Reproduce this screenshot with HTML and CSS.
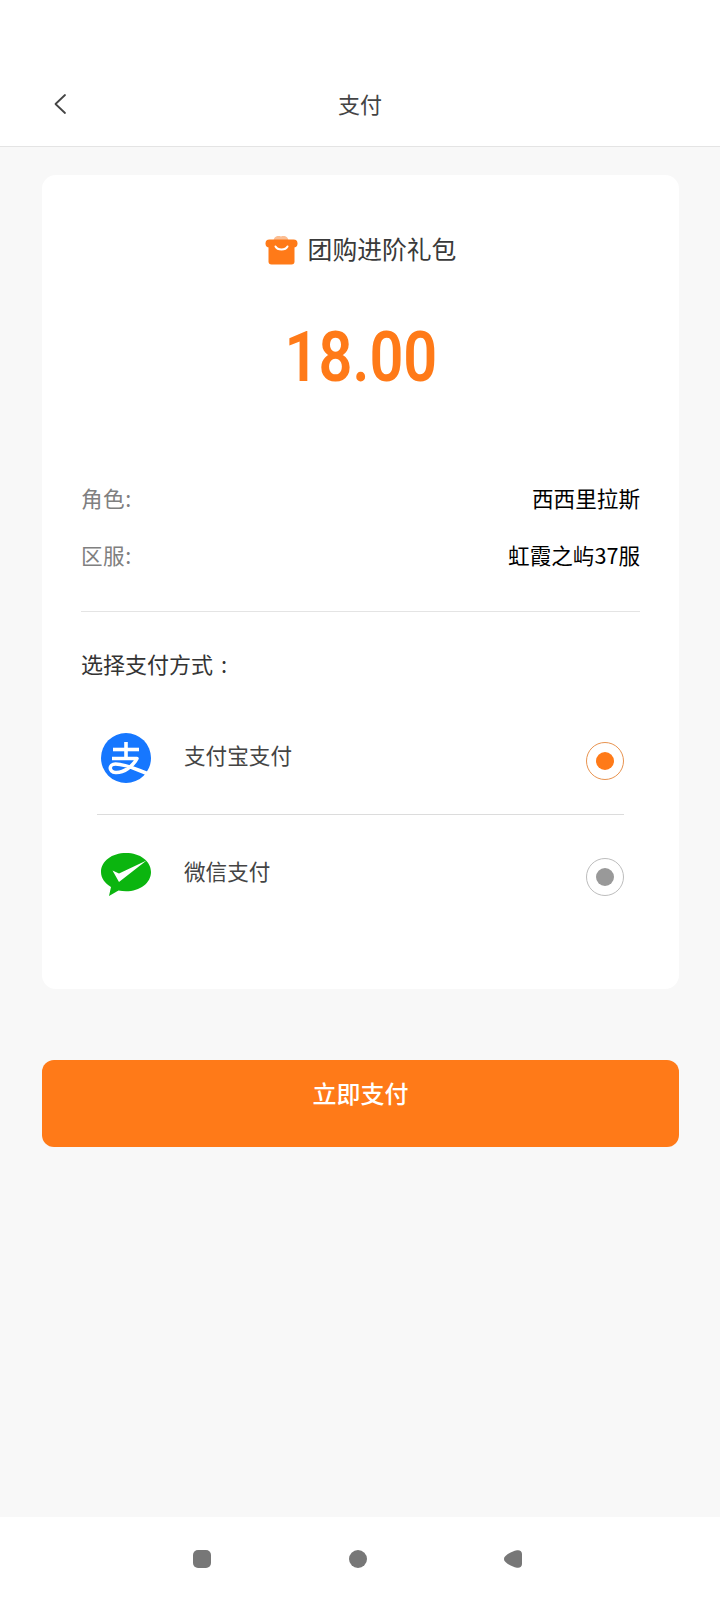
FILE: index.html
```html
<!DOCTYPE html>
<html lang="zh-CN">
<head>
  <meta charset="UTF-8" />
  <meta name="viewport" content="width=device-width, initial-scale=1.0"/>
  <title>支付</title>
  <link rel="stylesheet" href="styles.css">
</head>
<body>
  <div class="app">
    <div class="top-bar">
      <button class="back-btn" title="返回">
        <svg viewBox="0 0 14 22" fill="none" stroke="currentColor" stroke-width="1.8" stroke-linecap="round" stroke-linejoin="round">
          <path d="M12 2L2.500 11L12 20"></path>
        </svg>
      </button>
      <div class="page-title">支付</div>
    </div>

    <div class="content">
      <div class="card">
        <div class="product">
          <svg class="product-icon" viewBox="0 0 32 30">
            <path d="M8 6c0-4 4-6 7.500-4.500C19 0 23 2 23 6z" fill="#fbbd92"></path>
            <rect x="0" y="4.500" width="32" height="8" rx="4" fill="#ff7a18"></rect>
            <rect x="3" y="8" width="26" height="21.500" rx="3" fill="#ff7a18"></rect>
            <path d="M10 11.500c2 4 10 4 12 0" fill="none" stroke="#fff" stroke-width="2" stroke-linecap="round"></path>
          </svg>
          <span class="product-name">团购进阶礼包</span>
        </div>
        <div class="amount"><span class="amount-num">18.00</span></div>

        <div class="info-row">
          <span class="info-label">角色:</span>
          <span class="info-value">西西里拉斯</span>
        </div>
        <div class="info-row">
          <span class="info-label">区服:</span>
          <span class="info-value">虹霞之屿37服</span>
        </div>

        <div class="section-title">选择支付方式 :</div>

        <div class="pay-list">
          <div class="pay-row">
            <svg class="pay-icon" viewBox="0 0 50 50">
              <circle cx="25" cy="25" r="25" fill="#1677ff"></circle>
              <g fill="none" stroke="#fff" stroke-width="3.600" stroke-linejoin="round">
                <path d="M12 16.500H38"></path>
                <path d="M25 9V25"></path>
                <path d="M11 25.500H36C32 33 23 40 14.500 39.500C7.500 39 7.500 31 14.500 31C25 31 35 36.500 49 41.500"></path>
              </g>
            </svg>
            <span class="pay-name">支付宝支付</span>
            <span class="radio radio-on"></span>
          </div>
          <div class="pay-row">
            <svg class="pay-icon" viewBox="0 0 50 50">
              <path d="M25 4C11 4 0 12 0 23C0 29 4 34.500 10 38L8 47L17.500 41.500C20 42 22.500 42.300 25 42.300C39 42.300 50 34 50 23C50 12 39 4 25 4Z" fill="#0bb50f"></path>
              <path d="M11.500 21.500L18 24.500L45.500 11.500L18 33Z" fill="#fff"></path>
            </svg>
            <span class="pay-name">微信支付</span>
            <span class="radio"></span>
          </div>
        </div>
      </div>

      <button class="pay-btn">立即支付</button>
    </div>

    <div class="nav-bar">
      <span class="nav-square"></span>
      <span class="nav-circle"></span>
      <svg class="nav-back" viewBox="0 0 18 18">
        <path d="M1.500 6C4 3.500 9 1 13 0.300C16 -0.200 18 1.500 18 4V14C18 16.500 16 18.200 13 17.700C9 17 4 14.500 1.500 12C-0.500 10.500 -0.500 7.500 1.500 6Z"></path>
      </svg>
    </div>
  </div>
</body>
</html>
```

FILE: styles.css
```css
:root {
  --orange: #ff7a18;
  --bg-color: #f8f8f8;
  --card-bg: #ffffff;
  --text-primary: #000000;
  --text-dark: #333333;
  --text-secondary: #808080;
  --border-color: #e4e4e4;
}

* {
  box-sizing: border-box;
}

body {
  margin: 0;
  font-family: "Noto Sans CJK SC", "Noto Sans", sans-serif;
  background: var(--bg-color);
}

.app {
  display: flex;
  flex-direction: column;
  width: 720px;
  height: 1600px;
}

.top-bar {
  position: relative;
  display: flex;
  align-items: center;
  justify-content: center;
  height: 147px;
  padding-top: 60px;
  background: var(--card-bg);
  border-bottom: 1px solid var(--border-color);
}

.back-btn {
  position: absolute;
  left: 53px;
  top: 93px;
  width: 14px;
  height: 22px;
  padding: 0;
  border: none;
  background: none;
  color: #444444;
}

.back-btn svg {
  display: block;
  width: 14px;
  height: 22px;
}

.page-title {
  font-size: 22px;
  line-height: 32px;
  color: #444444;
}

.content {
  flex: 1;
  padding: 28px 41px 0 42px;
}

.card {
  height: 814px;
  padding: 59px 39px 0;
  background: var(--card-bg);
  border-radius: 14px;
}

.product {
  display: flex;
  align-items: center;
  justify-content: center;
  gap: 10px;
  height: 32px;
}

.product-icon {
  width: 33px;
  height: 30px;
}

.product-name {
  margin-top: -4px;
  font-size: 24.800px;
  line-height: 32px;
  color: #3a3a3a;
}

.amount {
  display: flex;
  justify-content: center;
  height: 80px;
  margin-top: 51px;
}

.amount-num {
  font-family: Roboto, "Liberation Sans", sans-serif;
  font-size: 70px;
  font-weight: 600;
  line-height: 80px;
  color: var(--orange);
  transform: scaleX(0.85);
}

.info-row {
  display: flex;
  align-items: center;
  justify-content: space-between;
  height: 36px;
  margin-bottom: 21px;
  font-size: 21.600px;
}

.amount + .info-row {
  margin-top: 82px;
}

.info-label {
  color: var(--text-secondary);
  letter-spacing: 0.500px;
}

.info-value {
  color: var(--text-primary);
}

.section-title {
  height: 88px;
  padding-top: 18px;
  margin-top: 39px;
  border-top: 1px solid var(--border-color);
  font-size: 22px;
  line-height: 66px;
  word-spacing: 3px;
  color: var(--text-dark);
}

.pay-list {
  padding: 0 16px;
}

.pay-row {
  display: flex;
  align-items: center;
  height: 116px;
  padding: 34px 0 32px 4px;
  border-bottom: 1px solid #dcdcdc;
}

.pay-row:last-child {
  border-bottom: none;
}

.pay-icon {
  flex: none;
  width: 50px;
  height: 50px;
}

.pay-name {
  flex: 1;
  margin-left: 33px;
  margin-bottom: 6px;
  font-size: 21.600px;
  line-height: 32px;
  color: #444444;
}

.radio {
  display: flex;
  align-items: center;
  justify-content: center;
  width: 38px;
  height: 38px;
  margin-top: 6px;
  border: 1.500px solid #bdbdbd;
  border-radius: 50%;
}

.radio::after {
  content: "";
  width: 18px;
  height: 18px;
  border-radius: 50%;
  background: #999999;
}

.radio-on {
  border-color: #e8934f;
}

.radio-on::after {
  background: var(--orange);
}

.pay-btn {
  display: block;
  width: 637px;
  height: 87px;
  margin-top: 71px;
  padding: 0 0 22px;
  border: none;
  border-radius: 12px;
  background: var(--orange);
  font-family: inherit;
  font-size: 24px;
  font-weight: 500;
  color: #ffffff;
}

.nav-bar {
  display: flex;
  align-items: center;
  justify-content: space-between;
  height: 83px;
  padding: 0 198px 0 193px;
  background: var(--card-bg);
}

.nav-square {
  width: 18px;
  height: 18px;
  border-radius: 5px;
  background: #777777;
}

.nav-circle {
  width: 18px;
  height: 18px;
  border-radius: 50%;
  background: #777777;
}

.nav-back {
  width: 18px;
  height: 18px;
  fill: #777777;
}
```
